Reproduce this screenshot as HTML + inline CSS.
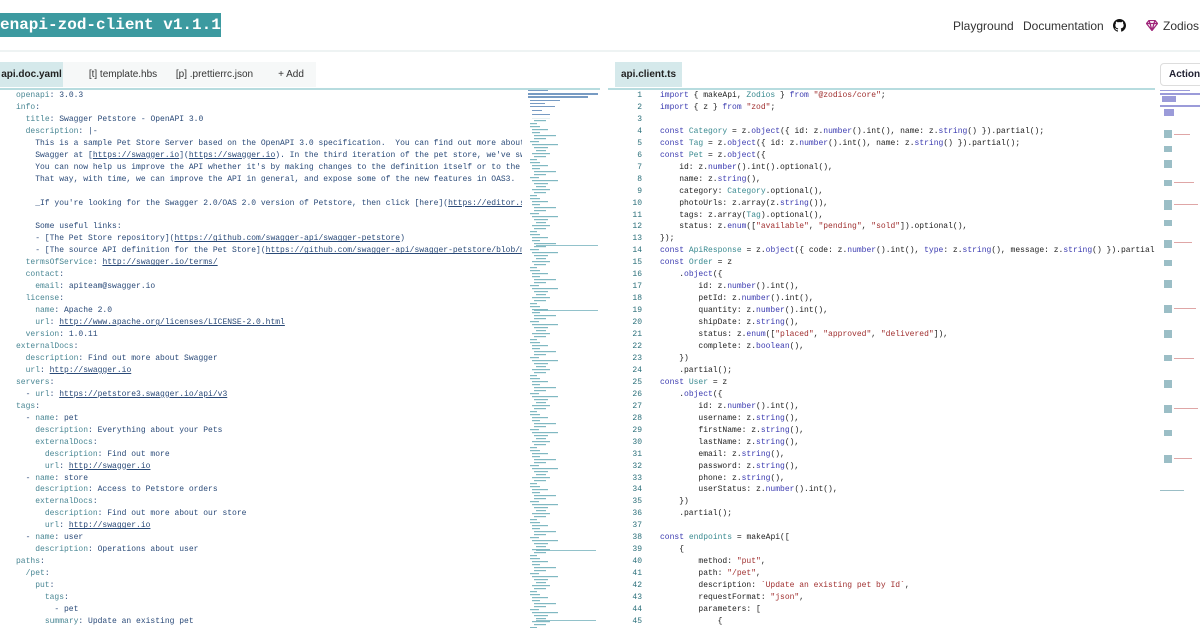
<!DOCTYPE html>
<html><head><meta charset="utf-8"><style>
*{margin:0;padding:0;box-sizing:border-box}
body{width:1200px;height:628px;overflow:hidden;background:#fff;font-family:"Liberation Sans",sans-serif;position:relative}
.title{position:absolute;left:0;top:13px;height:24px;width:221px;background:#3c9aa0;color:#fff;font:bold 16px/24px "Liberation Mono",monospace;white-space:nowrap;overflow:hidden}
.nav{position:absolute;top:19px;font-size:12px;color:#333}
.hr{position:absolute;left:0;right:0;top:50px;height:2px;background:#eef3f3}
.tab{position:absolute;top:62px;height:25px;font-size:10px;line-height:25px;color:#333;text-align:center;background:#f6f8f8}
.tab.a{background:#d5e9eb;font-weight:bold;color:#222}
.line{position:absolute;top:88px;height:2px;background:#b7dcdf}
.code{position:absolute;top:90px;font:8px/11.95px "Liberation Mono",monospace;white-space:pre;color:#2a4a78;overflow:hidden}
.k{color:#4a8794}.u{text-decoration:underline}
.kw{color:#3a3ab0}.ty{color:#3a8a90}.s{color:#a03030}
.ln{position:absolute;top:90px;left:620px;width:22px;text-align:right;font:8px/11.95px "Liberation Mono",monospace;color:#2a6f7a;white-space:pre}
.mm{position:absolute;top:90px}
</style></head><body>
<div class="title">enapi-zod-client v1.1.1</div>
<div class="nav" style="left:953px">Playground</div>
<div class="nav" style="left:1023px">Documentation</div>
<svg style="position:absolute;left:1113px;top:19px" width="13" height="13" viewBox="0 0 16 16"><path fill="#111" d="M8 0C3.6 0 0 3.6 0 8c0 3.5 2.3 6.5 5.5 7.6.4.1.5-.2.5-.4v-1.4c-2.2.5-2.7-1-2.7-1-.4-.9-.9-1.200-.9-1.2-.7-.5.1-.5.1-.5.8.1 1.2.8 1.2.8.7 1.2 1.9.9 2.3.7.1-.5.3-.9.5-1.1-1.8-.2-3.6-.9-3.6-4 0-.9.3-1.6.8-2.100-.1-.2-.4-1 .1-2.1 0 0 .7-.2 2.2.8.6-.2 1.3-.3 2-.3s1.4.1 2 .3c1.5-1 2.2-.8 2.2-.8.4 1.1.2 1.900.1 2.1.5.6.8 1.3.8 2.1 0 3.1-1.9 3.7-3.6 3.9.3.3.5.8.5 1.5v2.2c0 .2.1.5.6.4C13.7 14.5 16 11.5 16 8c0-4.4-3.6-8-8-8z"/></svg>
<svg style="position:absolute;left:1146px;top:20px" width="12" height="11" viewBox="0 0 12 11"><path d="M3 .5h6l2.5 3L6 10.5.5 3.5z M.5 3.5h11 M3 .5l1 3 2 7 2-7 1-3" fill="none" stroke="#a0267a" stroke-width="1.3"/></svg>
<div class="nav" style="left:1163px">Zodios</div>
<div class="hr"></div>

<div class="tab a" style="left:0;width:63px">api.doc.yaml</div>
<div class="tab" style="left:63px;width:100px;padding-left:20px">[t] template.hbs</div>
<div class="tab" style="left:163px;width:103px">[p] .prettierrc.json</div>
<div class="tab" style="left:266px;width:50px">+ Add</div>
<div class="line" style="left:0;width:600px"></div>

<div class="code" style="left:16px;width:506px"><span class="k">openapi</span>: 3.0.3
<span class="k">info</span>:
  <span class="k">title</span>: Swagger Petstore - OpenAPI 3.0
  <span class="k">description</span>: |-
    This is a sample Pet Store Server based on the OpenAPI 3.0 specification.  You can find out more about
    Swagger at [<span class="u">https://swagger.io</span>](<span class="u">https://swagger.io</span>). In the third iteration of the pet store, we've switched
    You can now help us improve the API whether it's by making changes to the definition itself or to the code.
    That way, with time, we can improve the API in general, and expose some of the new features in OAS3.

    _If you're looking for the Swagger 2.0/OAS 2.0 version of Petstore, then click [here](<span class="u">https://editor.swagger</span>

    Some useful links:
    - [The Pet Store repository](<span class="u">https://github.com/swagger-api/swagger-petstore</span>)
    - [The source API definition for the Pet Store](<span class="u">https://github.com/swagger-api/swagger-petstore/blob/master</span>
  <span class="k">termsOfService</span>: <span class="u">http://swagger.io/terms/</span>
  <span class="k">contact</span>:
    <span class="k">email</span>: apiteam@swagger.io
  <span class="k">license</span>:
    <span class="k">name</span>: Apache 2.0
    <span class="k">url</span>: <span class="u">http://www.apache.org/licenses/LICENSE-2.0.html</span>
  <span class="k">version</span>: 1.0.11
<span class="k">externalDocs</span>:
  <span class="k">description</span>: Find out more about Swagger
  <span class="k">url</span>: <span class="u">http://swagger.io</span>
<span class="k">servers</span>:
  - <span class="k">url</span>: <span class="u">https://petstore3.swagger.io/api/v3</span>
<span class="k">tags</span>:
  - <span class="k">name</span>: pet
    <span class="k">description</span>: Everything about your Pets
    <span class="k">externalDocs</span>:
      <span class="k">description</span>: Find out more
      <span class="k">url</span>: <span class="u">http://swagger.io</span>
  - <span class="k">name</span>: store
    <span class="k">description</span>: Access to Petstore orders
    <span class="k">externalDocs</span>:
      <span class="k">description</span>: Find out more about our store
      <span class="k">url</span>: <span class="u">http://swagger.io</span>
  - <span class="k">name</span>: user
    <span class="k">description</span>: Operations about user
<span class="k">paths</span>:
  <span class="k">/pet</span>:
    <span class="k">put</span>:
      <span class="k">tags</span>:
        - pet
      <span class="k">summary</span>: Update an existing pet</div>

<svg class="mm" style="left:528px" width="72" height="538">
<defs><pattern id="p1" width="72" height="36" patternUnits="userSpaceOnUse">
<g fill="#4a9aa8" opacity=".7">
<rect x="2" y="0" width="10" height="1.2"/><rect x="4" y="3" width="16" height="1.2"/><rect x="4" y="6" width="8" height="1.2"/><rect x="6" y="9" width="22" height="1.2"/><rect x="6" y="12" width="12" height="1.2"/><rect x="2" y="15" width="9" height="1.2"/><rect x="4" y="18" width="26" height="1.2"/><rect x="6" y="21" width="14" height="1.2"/><rect x="8" y="24" width="10" height="1.2"/><rect x="4" y="27" width="18" height="1.2"/><rect x="6" y="30" width="12" height="1.2"/><rect x="2" y="33" width="7" height="1.2"/>
</g></pattern></defs>
<g fill="#4a7ab0" opacity=".75">
<rect x="0" y="0" width="20" height="1"/><rect x="0" y="3" width="70" height="2"/><rect x="0" y="6" width="60" height="2"/><rect x="2" y="10" width="30" height="1"/>
<rect x="2" y="13" width="15" height="1"/><rect x="2" y="16" width="25" height="1"/><rect x="4" y="20" width="10" height="1"/><rect x="4" y="24" width="18" height="1"/>
</g>
<rect x="0" y="28" width="72" height="510" fill="url(#p1)"/>
<g fill="#4a9aa8" opacity=".6">
<rect x="8" y="155" width="62" height="1"/><rect x="6" y="220" width="64" height="1"/><rect x="8" y="460" width="60" height="1"/><rect x="8" y="530" width="60" height="1"/>
</g></svg>

<div class="tab a" style="left:615px;width:67px">api.client.ts</div>
<div class="line" style="left:608px;width:547px"></div>
<div style="position:absolute;left:1160px;top:63px;width:48px;height:23px;border:1px solid #ddd;border-radius:4px;font-size:10px;line-height:21px;padding-left:8px;font-weight:bold;color:#223">Actions</div>

<div class="ln">1
2
3
4
5
6
7
8
9
10
11
12
13
14
15
16
17
18
19
20
21
22
23
24
25
26
27
28
29
30
31
32
33
34
35
36
37
38
39
40
41
42
43
44
45</div>
<div class="code" style="left:660px;width:495px;color:#222"><span class="kw">import</span> { makeApi, <span class="ty">Zodios</span> } <span class="kw">from</span> <span class="s">"@zodios/core"</span>;
<span class="kw">import</span> { z } <span class="kw">from</span> <span class="s">"zod"</span>;

<span class="kw">const</span> <span class="ty">Category</span> = z.<span class="kw">object</span>({ id: z.<span class="kw">number</span>().int(), name: z.<span class="kw">string</span>() }).partial();
<span class="kw">const</span> <span class="ty">Tag</span> = z.<span class="kw">object</span>({ id: z.<span class="kw">number</span>().int(), name: z.<span class="kw">string</span>() }).partial();
<span class="kw">const</span> <span class="ty">Pet</span> = z.<span class="kw">object</span>({
    id: z.<span class="kw">number</span>().int().optional(),
    name: z.<span class="kw">string</span>(),
    category: <span class="ty">Category</span>.optional(),
    photoUrls: z.array(z.<span class="kw">string</span>()),
    tags: z.array(<span class="ty">Tag</span>).optional(),
    status: z.<span class="kw">enum</span>([<span class="s">"available"</span>, <span class="s">"pending"</span>, <span class="s">"sold"</span>]).optional(),
});
<span class="kw">const</span> <span class="ty">ApiResponse</span> = z.<span class="kw">object</span>({ code: z.<span class="kw">number</span>().int(), <span class="kw">type</span>: z.<span class="kw">string</span>(), message: z.<span class="kw">string</span>() }).partial();
<span class="kw">const</span> <span class="ty">Order</span> = z
    .<span class="kw">object</span>({
        id: z.<span class="kw">number</span>().int(),
        petId: z.<span class="kw">number</span>().int(),
        quantity: z.<span class="kw">number</span>().int(),
        shipDate: z.<span class="kw">string</span>(),
        status: z.<span class="kw">enum</span>([<span class="s">"placed"</span>, <span class="s">"approved"</span>, <span class="s">"delivered"</span>]),
        complete: z.<span class="kw">boolean</span>(),
    })
    .partial();
<span class="kw">const</span> <span class="ty">User</span> = z
    .<span class="kw">object</span>({
        id: z.<span class="kw">number</span>().int(),
        username: z.<span class="kw">string</span>(),
        firstName: z.<span class="kw">string</span>(),
        lastName: z.<span class="kw">string</span>(),
        email: z.<span class="kw">string</span>(),
        password: z.<span class="kw">string</span>(),
        phone: z.<span class="kw">string</span>(),
        userStatus: z.<span class="kw">number</span>().int(),
    })
    .partial();

<span class="kw">const</span> <span class="ty">endpoints</span> = makeApi([
    {
        method: <span class="s">"put"</span>,
        path: <span class="s">"/pet"</span>,
        description: <span class="s">`Update an existing pet by Id`</span>,
        requestFormat: <span class="s">"json"</span>,
        parameters: [
            {</div>

<svg class="mm" style="left:1160px" width="40" height="420">
<g fill="#5a5ac0" opacity=".6">
<rect x="0" y="0" width="30" height="1"/><rect x="0" y="3" width="40" height="2"/><rect x="2" y="6" width="14" height="6"/><rect x="0" y="15" width="40" height="2"/>
<rect x="4" y="19" width="10" height="7"/>
</g>
<g fill="#4a8a98" opacity=".55">
<rect x="4" y="40" width="8" height="8"/><rect x="4" y="56" width="8" height="6"/><rect x="4" y="70" width="8" height="8"/><rect x="4" y="90" width="8" height="6"/><rect x="4" y="110" width="8" height="10"/><rect x="4" y="130" width="8" height="6"/><rect x="4" y="150" width="8" height="8"/><rect x="4" y="170" width="8" height="6"/><rect x="4" y="190" width="8" height="8"/><rect x="4" y="215" width="8" height="8"/><rect x="4" y="240" width="8" height="8"/><rect x="4" y="265" width="8" height="6"/><rect x="4" y="290" width="8" height="8"/><rect x="4" y="315" width="8" height="8"/><rect x="4" y="340" width="8" height="6"/><rect x="4" y="365" width="8" height="8"/><rect x="0" y="400" width="24" height="1"/>
</g>
<g fill="#c05050" opacity=".5">
<rect x="14" y="44" width="16" height="1"/><rect x="14" y="92" width="20" height="1"/><rect x="14" y="114" width="24" height="1"/><rect x="14" y="152" width="18" height="1"/><rect x="14" y="218" width="22" height="1"/><rect x="14" y="268" width="20" height="1"/><rect x="14" y="318" width="24" height="1"/><rect x="14" y="368" width="18" height="1"/>
</g></svg>
</body></html>
